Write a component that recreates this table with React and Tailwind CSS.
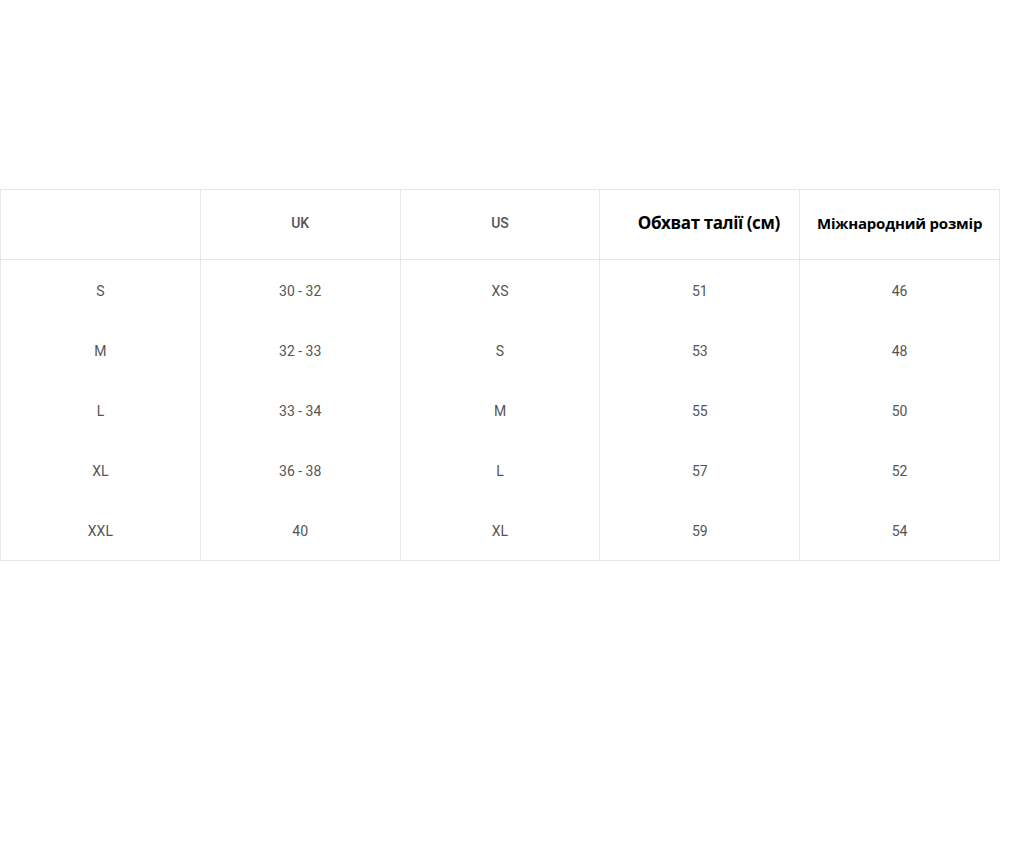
import React from "react";

const rows = [
  ["S", "30 - 32", "XS", "51", "46"],
  ["M", "32 - 33", "S", "53", "48"],
  ["L", "33 - 34", "M", "55", "50"],
  ["XL", "36 - 38", "L", "57", "52"],
  ["XXL", "40", "XL", "59", "54"],
];

const App = () => {
  return (
    <div className="min-h-screen bg-white pt-[189px]">
      <table className="w-[1000px] table-fixed border-collapse border border-[#e8e8e8] font-['Roboto',sans-serif]">
        <thead>
          <tr className="h-[70px]">
            <th className="border border-[#e8e8e8]" />
            <th className="border border-[#e8e8e8] pb-[2px] text-[14px] font-medium text-[#555]">UK</th>
            <th className="border border-[#e8e8e8] pb-[2px] text-[14px] font-medium text-[#555]">US</th>
            <th className="border border-[#e8e8e8] pb-[3px] pl-[18px] text-[17px] font-bold text-black font-['Open_Sans',sans-serif] tracking-[-0.4px]">
              Обхват талії (см)
            </th>
            <th className="border border-[#e8e8e8] pb-[3px] text-[15px] font-bold text-black font-['Open_Sans',sans-serif] tracking-[-0.2px]">
              Міжнародний розмір
            </th>
          </tr>
        </thead>
        <tbody>
          {rows.map((r, i) => (
            <tr key={i} className={i === rows.length - 1 ? "h-[61px]" : "h-[60px]"}>
              {r.map((c, j) => (
                <td
                  key={j}
                  className="border-x border-[#e8e8e8] pt-[4px] text-center text-[14px] text-[#555]"
                >
                  {c}
                </td>
              ))}
            </tr>
          ))}
        </tbody>
      </table>
    </div>
  );
};

export default App;
